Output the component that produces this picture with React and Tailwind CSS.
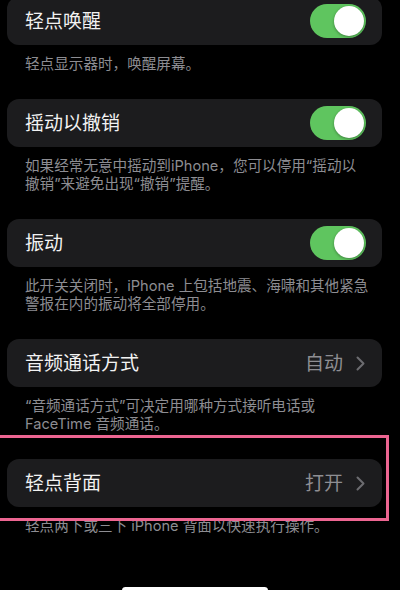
import React from "react";

const font = { fontFamily: '"Inter", "Noto Sans CJK SC", sans-serif' };

function Toggle() {
  return (
    <div className="flex h-[34px] w-[56px] items-center justify-end rounded-full bg-[#5fc55f] p-[2px]">
      <div className="h-[30px] w-[30px] rounded-full bg-white shadow-[0_1px_3px_rgba(0,0,0,0.35)]" />
    </div>
  );
}

function Chevron() {
  return (
    <svg width="9" height="15" viewBox="0 0 9 15" fill="none" className="ml-[13px]">
      <path d="M1.5 1.5 L7.5 7.5 L1.5 13.5" stroke="#6c6c70" strokeWidth="2" strokeLinecap="round" strokeLinejoin="round" />
    </svg>
  );
}

function Card({ title, value, toggle, className = "" }) {
  return (
    <div className={`ml-[7px] mr-[18px] flex h-[48px] items-center justify-between rounded-[12px] bg-[#1c1c1e] pl-[18px] pr-[16px] ${className}`}>
      <span className="text-[19px] leading-none text-[#f2f2f2]">{title}</span>
      {toggle ? (
        <Toggle />
      ) : (
        <div className="flex items-center pr-[1px]">
          <span className="text-[19px] leading-none text-[#8e8e93]">{value}</span>
          <Chevron />
        </div>
      )}
    </div>
  );
}

function Caption({ children }) {
  return (
    <div className="pl-[25px] pb-[26px] pt-[10px] text-[14.6px] leading-[18px] text-[#8d8d92]">
      {children}
    </div>
  );
}

export default function App() {
  return (
    <div className="relative h-[590px] w-[400px] overflow-hidden bg-black" style={font}>
      <div className="flex flex-col">
        <Card title="轻点唤醒" toggle className="-mt-[3px]" />
        <Caption>轻点显示器时，唤醒屏幕。</Caption>

        <Card title="摇动以撤销" toggle />
        <Caption>
          如果经常无意中摇动到iPhone，您可以停用“摇动以
          <br />
          撤销”来避免出现“撤销”提醒。
        </Caption>

        <Card title="振动" toggle />
        <Caption>
          此开关关闭时，iPhone 上包括地震、海啸和其他紧急
          <br />
          警报在内的振动将全部停用。
        </Caption>

        <Card title="音频通话方式" value="自动" />
        <Caption>
          “音频通话方式”可决定用哪种方式接听电话或
          <br />
          FaceTime 音频通话。
        </Caption>

        <Card title="轻点背面" value="打开" />
        <Caption>轻点两下或三下 iPhone 背面以快速执行操作。</Caption>
      </div>

      {/* highlight frame around the back-tap row */}
      <div className="pointer-events-none absolute left-[-6px] top-[435px] h-[86px] w-[395px] border-[3px] border-[#ec6591]" />

      {/* home indicator */}
      <div className="absolute bottom-[-4px] left-[122px] h-[7px] w-[146px] rounded-full bg-white" />
    </div>
  );
}
